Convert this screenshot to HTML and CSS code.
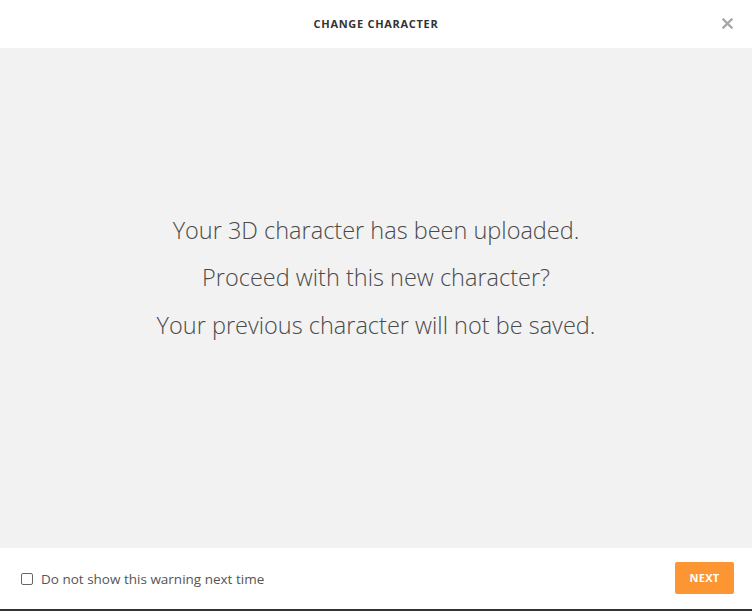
FILE: index.html
```html
<!DOCTYPE html>
<html>
<head>
<meta charset="utf-8">
<link rel="stylesheet" href="styles.css">
</head>
<body>
<div class="modal">
  <header class="head">
    <h1 class="title">CHANGE CHARACTER</h1>
    <button class="close" aria-label="Close">
      <svg width="11" height="11" viewBox="0 0 11 11"><path d="M1.5 1.5L9.5 9.5M9.5 1.5L1.5 9.5" stroke="#a8a8a8" stroke-width="2.4" stroke-linecap="square"/></svg>
    </button>
  </header>
  <main class="body">
    <p class="msg">Your 3D character has been uploaded.</p>
    <p class="msg">Proceed with this new character?</p>
    <p class="msg">Your previous character will not be saved.</p>
  </main>
  <footer class="foot">
    <label class="check"><span class="box"></span>Do not show this warning next time</label>
    <button class="next">NEXT</button>
  </footer>
  <div class="strip"></div>
</div>
</body>
</html>
```
FILE: styles.css
```css
html, body { margin: 0; padding: 0; }
body { width: 752px; height: 611px; overflow: hidden; font-family: "Open Sans", "Noto Sans", sans-serif; background: #fff; }
.modal { display: flex; flex-direction: column; height: 611px; }
.head { height: 48px; flex: none; display: flex; align-items: center; justify-content: center; position: relative; background: #fff; }
.title { margin: 0 0 2px; font-size: 11px; font-weight: 700; letter-spacing: 0.7px; color: #333; font-family: "Open Sans", sans-serif; }
.close { position: absolute; right: 19px; top: 18px; border: 0; background: none; padding: 0; width: 11px; height: 11px; display: flex; }
.body { flex: 1; background: #f2f2f2; display: flex; flex-direction: column; align-items: center; justify-content: center; padding-bottom: 40px; }
.msg { margin: 0; font-size: 23.5px; font-weight: 300; color: #4a4a4a; line-height: 47.5px; }
.foot { height: 61px; flex: none; display: flex; align-items: center; justify-content: space-between; padding: 0 18px 0 21px; background: #fff; }
.check { display: flex; align-items: center; font-size: 13.5px; color: #555; padding-top: 1px; }
.box { width: 10px; height: 10px; border: 1px solid #666; border-radius: 2px; margin-right: 8px; background: #fff; }
.next { width: 59px; height: 32px; background: #fd9632; color: #fff; border: 0; border-radius: 2px; font-family: "Open Sans", sans-serif; font-weight: 700; font-size: 11px; letter-spacing: 0.3px; margin-top: -2px; }
.strip { height: 2px; flex: none; background: #333; }
```
